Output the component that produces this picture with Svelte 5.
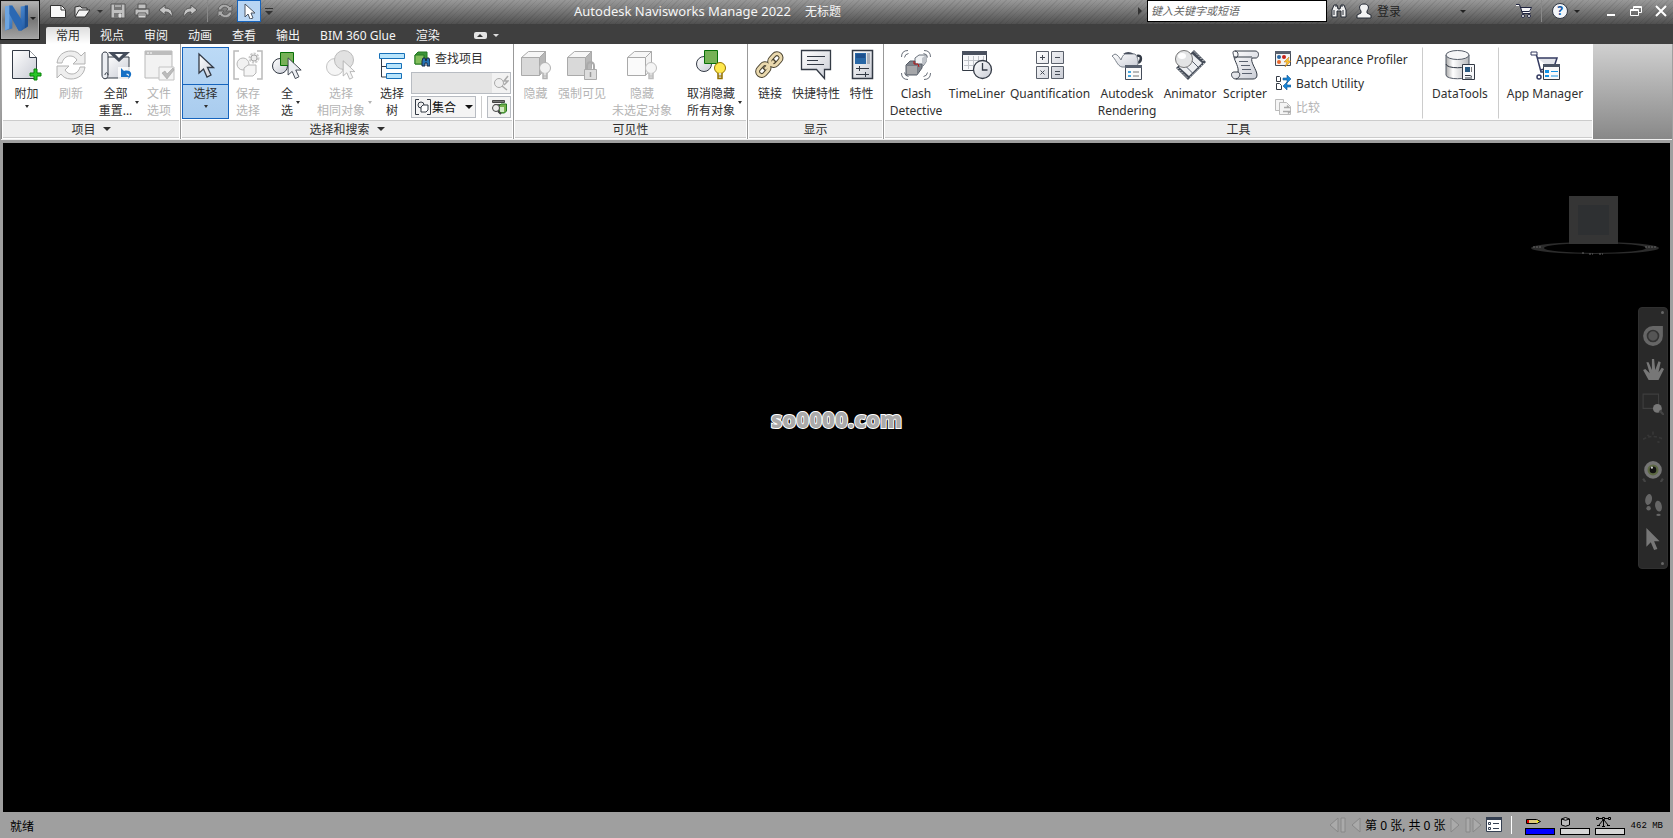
<script lang="ts">
	type Tool = {
		icon: string;
		lines: string[];
		disabled?: boolean;
		menu?: 'below' | 'side';
		selected?: boolean;
		divided?: boolean;
	};

	const tabs = ['常用', '视点', '审阅', '动画', '查看', '输出', 'BIM 360 Glue', '渲染'];
	let activeTab = $state('常用');
	let keyword = $state('');
	let quickFind = $state('');

	const project: Tool[] = [
		{ icon: 'append', lines: ['附加'], menu: 'below' },
		{ icon: 'refresh', lines: ['刷新'], disabled: true },
		{ icon: 'reset', lines: ['全部', '重置...'], menu: 'side' },
		{ icon: 'fileOptions', lines: ['文件', '选项'], disabled: true }
	];
	const selection: Tool[] = [
		{ icon: 'cursor', lines: ['选择'], menu: 'below', selected: true },
		{ icon: 'saveSelection', lines: ['保存', '选择'], disabled: true },
		{ icon: 'selectAll', lines: ['全', '选'], menu: 'side' },
		{ icon: 'selectSame', lines: ['选择', '相同对象'], disabled: true, menu: 'side' },
		{ icon: 'tree', lines: ['选择', '树'] }
	];
	const visibility: Tool[] = [
		{ icon: 'hide', lines: ['隐藏'], disabled: true },
		{ icon: 'require', lines: ['强制可见'], disabled: true },
		{ icon: 'hideUnselected', lines: ['隐藏', '未选定对象'], disabled: true },
		{ icon: 'unhide', lines: ['取消隐藏', '所有对象'], menu: 'side' }
	];
	const display: Tool[] = [
		{ icon: 'link', lines: ['链接'] },
		{ icon: 'quickProps', lines: ['快捷特性'] },
		{ icon: 'properties', lines: ['特性'] }
	];
	const tools: Tool[] = [
		{ icon: 'clash', lines: ['Clash', 'Detective'] },
		{ icon: 'timeliner', lines: ['TimeLiner'] },
		{ icon: 'quantification', lines: ['Quantification'] },
		{ icon: 'rendering', lines: ['Autodesk', 'Rendering'] },
		{ icon: 'animator', lines: ['Animator'] },
		{ icon: 'scripter', lines: ['Scripter'] }
	];
	const extras: Tool[] = [
		{ icon: 'dataTools', lines: ['DataTools'], divided: true },
		{ icon: 'appManager', lines: ['App Manager'], divided: true }
	];

	const arrowPath = 'M9 1v19l4.500-4 3.500 8 4-2-3.500-7.500h6z';
	const bulb = (fill: string, line: string) =>
		`<circle cx="24" cy="18" r="5.500" fill="${fill}" stroke="${line}"/><path d="M22 23v5.500h4V23" fill="#ddd" stroke="${line}" stroke-width="1.500"/><path d="M22 26h4" stroke="${line}"/>`;
	const cube = (side: string, face: string) =>
		`<path d="M.5 7.500h18v18H.5z" fill="${face}" stroke="#aaa"/><path d="M.5 7.500l7-6h17l-6 6z" fill="#f6f6f6" stroke="#aaa"/><path d="M18.500 7.500l6-6v17l-6 7z" fill="${side}" stroke="#aaa"/>`;

	// 30 x 30 artwork for the large ribbon buttons
	const large: Record<string, string> = {
		append: '<path d="M.5.500h17l7 7v21H.5z" fill="url(#paper)" stroke="#333a45"/><path d="M17.500.500v7h7" fill="#fff" stroke="#333a45"/><path d="M22 20h3v4h4v3h-4v4h-3v-4h-4v-3h4z" fill="#28c628" stroke="#078207" transform="translate(0 -1)"/>',
		refresh: '<g fill="#eee" stroke="#b3b3b3" stroke-linejoin="round"><path d="M1 13C2 5 8 1 15 1c5 0 8 2 10 5l4-4v12H17l4-4c-2-3-4-4-7-4-4 0-7 3-8 7z"/><path d="M29 17c-1 8-7 12-14 12-5 0-8-2-10-5l-4 4V16h12l-4 4c2 3 4 4 7 4 4 0 7-3 8-7z"/></g>',
		reset: '<path d="M4 7h24v21H4z" fill="url(#paper)" stroke="#333a45"/><path d="M1 5c0-4 6-4 6 0v20c0 5-6 5-6 0z" fill="#eceef2" stroke="#333a45"/><path d="M4 25c0-3 3-3 3 0" fill="none" stroke="#333a45"/><path d="M7 2h22L18 12z" fill="#454d5b"/><path d="M14 4h8l-4 4z" fill="#fff"/><path d="M17 17h13v13H17z" fill="#fff" opacity=".8"/><path d="M20 18v9h9l-4-3c3-1 4 1 2 5 6-4 3-10-4-8z" fill="#1670c5"/>',
		fileOptions: '<path d="M1 1h27v27H1z" fill="#f2f2f2" stroke="#b9b9b9"/><path d="M1 1h27v4H1z" fill="#bdbdbd"/><path d="M3 3h2M6 3h2" stroke="#fff"/><path d="M15 17h15v13H15z" fill="#f4f4f4" stroke="#c4c4c4"/><path d="M18 23l3-2 2 3 6-6 1 2-7 9z" fill="#bbb" stroke="#999" stroke-width=".5"/>',
		cursor: `<path d="${arrowPath}" transform="translate(-1 3)" fill="url(#paper)" stroke="#333a45" stroke-width="1.300"/>`,
		saveSelection: '<path d="M6 1H1v28h5M24 1h5v28h-5" fill="none" stroke="#bbb" stroke-width="1.500"/><circle cx="10" cy="14" r="6" fill="#f1f1f1" stroke="#b6b6b6"/><path d="M11 18l4-3h8v8l-3 3h-9z" fill="#f5f5f5" stroke="#b6b6b6"/><circle cx="21" cy="8" r="4" fill="none" stroke="#ccc" stroke-width="3" stroke-dasharray="2 1"/><circle cx="21" cy="8" r="3" fill="#eee" stroke="#aaa"/>',
		selectAll: `<circle cx="8" cy="16" r="7.500" fill="url(#paper)" stroke="#333a45"/><path d="M8.500 2.500h13v13h-13z" fill="#77b157" stroke="#087008"/><path d="${arrowPath}" transform="translate(8 7) scale(.9)" fill="#eceef2" stroke="#333a45"/>`,
		selectSame: `<circle cx="9" cy="17" r="8.500" fill="#f5f5f5" stroke="#c5c5c5"/><circle cx="18" cy="10" r="9.500" fill="#e1e1e1" stroke="#bbb"/><path d="${arrowPath}" transform="translate(10 10) scale(.8)" fill="#f5f5f5" stroke="#aaa"/>`,
		tree: '<path d="M4.500 8v19h5M4.500 16.500h5" fill="none" stroke="#333a45"/><g fill="#b9e5fc" stroke="#1670b8"><path d="M2.500 3.500h25v5h-25zM9.500 13.500h15v5h-15zM9.500 23.500h15v5h-15z"/></g>',
		hide: cube('#b7b7b7', '#d9d9d9') + bulb('#f1f1f1', '#b2b2b2'),
		require: cube('#b7b7b7', '#d9d9d9') + '<path d="M20 20v-4c0-5 7-5 7 0v4" fill="none" stroke="#aaa" stroke-width="2"/><path d="M17.500 19.500h12v10h-12z" fill="#ddd" stroke="#aaa"/><path d="M23.500 22v5" stroke="#999" stroke-width="1.500"/>',
		hideUnselected: cube('#f2f2f2', '#fafafa') + bulb('#f5f5f5', '#bdbdbd'),
		unhide: '<circle cx="8" cy="14" r="7.500" fill="url(#paper)" stroke="#333a45"/><path d="M8.500.500h13v13h-13z" fill="#77b157" stroke="#087008"/>' + bulb('#ffe84d', '#957300'),
		link: '<g fill="none"><g stroke="#4a4330" stroke-width="5"><rect x="2" y="16" width="13" height="8" rx="4" transform="rotate(-48 8 20)"/><rect x="14" y="6" width="13" height="8" rx="4" transform="rotate(-48 20 10)"/><path d="M9 20L20 10"/></g><g stroke="#ead9ae" stroke-width="3"><rect x="2" y="16" width="13" height="8" rx="4" transform="rotate(-48 8 20)"/><rect x="14" y="6" width="13" height="8" rx="4" transform="rotate(-48 20 10)"/><path d="M10 19L19 11"/></g></g>',
		quickProps: '<path d="M.5.500h29v19h-6v9l-8-9H.5z" fill="url(#paper)" stroke="#333a45" stroke-width="1.300"/><path d="M6 6.500h18M6 10.500h11M6 14.500h17" stroke="#333a45"/>',
		properties: '<path d="M5.500.500h20v28h-20z" fill="url(#paper)" stroke="#333a45" stroke-width="1.500"/><path d="M8 3h11v11H8z" fill="#2867a6"/><path d="M9 4h9v4H9z" fill="#1e508d"/><path d="M20 3h3v11h-3z" fill="#a9afb9"/><path d="M9 18.500h13M9 24.500h13M12.500 16v5M18.500 22v5" stroke="#333a45"/>',
		clash: '<g fill="none" stroke="#6a707a"><path d="M.5 7Q.5.500 7 .5M3.500 7.500Q4 4 7.500 3.500M23 .5q6.500 0 6.500 6.500M22.500 3.500q4 .5 4 4M.5 23q0 6.500 6.500 6.500M3.500 22.500q.5 3.500 4 4M23 29.500q6.500 0 6.500-6.500M22.500 26.500q3.500-.5 4-4"/></g><path d="M14 8l4-3h7v7l-3 4h-8z" fill="#f1f3f5" stroke="#69707a"/><path d="M21 8l4-3v7l-4 4z" fill="#c0c4ca"/><path d="M5 15l4-4h5v3h7v4l-5 7H5z" fill="#7f848c" stroke="#555b65"/><path d="M5.500 15.500h11v9h-11z" fill="#a5a6a9" stroke="#777c84"/><path d="M13 11v3h4l1 3" fill="none" stroke="#b81414"/>',
		timeliner: '<path d="M.5 1.500h24v19H.5z" fill="#f8f9fb" stroke="#333a45"/><path d="M0 1h25v4H0z" fill="#4a515f"/><path d="M2 10.500h21M2 15.500h21M6.500 6v13M11.500 6v13M16.500 6v13M21.500 6v13" stroke="#c2c5ca"/><circle cx="20.500" cy="19.500" r="9" fill="url(#paper)" stroke="#333a45" stroke-width="1.300"/><path d="M20.500 13v7h5" fill="none" stroke="#333a45" stroke-width="1.300"/>',
		quantification: '<g fill="url(#paper)" stroke="#5a606b"><path d="M1.500 1.500h12v12h-12zM16.500 1.500h12v12h-12zM1.500 16.500h12v12h-12zM16.500 16.500h12v12h-12z"/></g><path d="M5 7.500h5M7.500 5v5M20 7.500h5M5.500 20.500l4 4M9.500 20.500l-4 4M20 21.500h5M20 24.500h5" stroke="#454b55"/>',
		rendering: '<path d="M25 6c5-2 5 5 1 7" fill="none" stroke="#333a45" stroke-width="2.500"/><path d="M10 17C5 16 4 9 0 6l3-2c3 1 4 3 6 6 1-3 2-5 4-6h10c3 3 4 8 2 13z" fill="url(#paper)" stroke="#7b828c"/><path d="M11 4q5-4 11 0z" fill="#4a515f"/><path d="M13.500 15.500h16v14h-16z" fill="#fafafa" stroke="#454c5a"/><path d="M13 15h17v3H13z" fill="#59616f"/><path d="M16 21h3v2h-3zM16 25h3v2h-3z" fill="#46a6de"/><path d="M21 22h6M21 26h6" stroke="#777"/>',
		animator: '<path d="M19 0L31 12 13 30 1 18z" fill="#454c58"/><path d="M17 4L27 13 14 26 4 17z" fill="#eef0f3"/><path d="M8.500 14l9 9M14 8l9 9" stroke="#59616f"/><path d="M19 1.500L29.500 12M2.500 18L13 28.500" fill="none" stroke="#fff" stroke-dasharray="1.500 1.500"/><path d="M29 13L14 28" stroke="#b9bec6" stroke-dasharray="1.500 1.500"/><circle cx="9" cy="9" r="8.500" fill="#e3e4e5" stroke="#777"/><ellipse cx="7" cy="6" rx="4" ry="3" fill="#fff"/>',
		scripter: '<path d="M5 1h20c5 0 4 7 1 7h-4c-2 4 5 12 5 17 0 3-2 4-4 4H6c-5 0-6-7-2-7h4C9 17 5 12 4 7 3 3 2 1 5 1z" fill="url(#paper)" stroke="#333a45"/><path d="M5 1c4 0 4 7 0 7M8 22c3 1 2 6-2 7M4 7h18" fill="none" stroke="#333a45"/><path d="M9 11.500h9M11 15.500h9M12 19.500h9M12 23.500h10" stroke="#59616f"/>',
		dataTools: '<path d="M1 5v20c0 5 23 5 23 0V5" fill="url(#metal)" stroke="#555c68"/><ellipse cx="12.500" cy="5" rx="11.500" ry="4.500" fill="#f6f6f7" stroke="#555c68"/><path d="M1 14c0 5 23 5 23 0" fill="none" stroke="#333a45"/><path d="M17.500 14.500h12v15h-12z" fill="#f7f8fa" stroke="#333a45"/><path d="M20 17h5v5h-5z" fill="#285982"/><path d="M26.500 17v5" stroke="#777"/><path d="M20 25.500h5l2 1M20 28h7" fill="none" stroke="#333a45"/>',
		appManager: '<path d="M1 3h5l5 19h14M7 8h20l-3 9-14 3" fill="#e2e4ea" stroke="#343b61" stroke-width="1.500"/><path d="M1 2h6v3H1z" fill="#fff" stroke="#343b61"/><path d="M7 27a2 2 0 104 0 2 2 0 10-4 0" fill="#fff" stroke="#343b61" stroke-width="1.500"/><path d="M13.500 14.500h16v15h-16z" fill="#fafafa" stroke="#333a45"/><path d="M13 14h17v3H13z" fill="#4a5364"/><path d="M15 20h4v3h-4zM15 25h4v2h-4z" fill="#1593e6"/><path d="M21 21.500h7M21 26h7" stroke="#1593e6"/>'
	};

	// 16 x 16 artwork
	const small: Record<string, string> = {
		newDoc: '<path d="M.5 2.500h11l4 4v8H.5z" fill="#fafafa" stroke="#333"/><path d="M11 3v4h4" fill="none" stroke="#333"/>',
		open: '<path d="M1 13V4l5-1 2 2h5v3" fill="#ddd" stroke="#333"/><path d="M1 14l4-7h11l-5 7z" fill="#f5f5f5" stroke="#333"/>',
		save: '<path d="M1 1h14v14H1z" fill="#c0c0c0" stroke="#555"/><path d="M4 1h8v6H4zM4 10h8v5H4z" fill="#777"/><path d="M5 3h6M9 11h2v3H9z" fill="#ddd" stroke="#ddd"/>',
		print: '<path d="M4 1h8v5H4zM1 6h14v6H1z" fill="#c0c0c0" stroke="#555"/><path d="M4 10h8v5H4z" fill="#d5d5d5" stroke="#555"/><path d="M5 12h6" stroke="#666"/>',
		undo: '<path d="M1 7l6-5v3c6 0 8 4 7 9-2-4-4-5-7-5v3z" fill="#c5c5c5" stroke="#555"/>',
		redo: '<path d="M15 7L9 2v3C3 5 1 9 2 14c2-4 4-5 7-5v3z" fill="#c5c5c5" stroke="#555"/>',
		sync: '<path d="M1 7c1-7 9-7 12-3l2-2v6H9l2-2C9 3 5 4 4 7zM15 9c-1 7-9 7-12 3l-2 2V8h6l-2 2c2 3 6 2 7-1z" fill="#aaa" stroke="#606060"/>',
		pick: '<path d="M4 1v13l3-3 2 5 3-1-2-5h4z" fill="#fff" stroke="#4c5562"/>',
		binoculars: '<path d="M1 7l2-5h3l1 4h2l1-4h3l2 5v7h-5V8H6v6H1z" fill="#eee" stroke="#252a35"/><path d="M3 7v5M12 7v5M4 3h2M10 3h2" stroke="#252a35"/>',
		user: '<path d="M5 8C2 4 4 1 8 1s6 3 3 7v2l4 2v3H1v-3l4-2z" fill="#f2f2f2" stroke="#252a35"/>',
		cart: '<path d="M5 4.500h10.500l-2 6H7z" fill="#f5f5f7"/><path d="M0 1.500h3.500l3 9h8M4.500 4.500h11l-2 4H6" fill="none" stroke="#20243f"/><path d="M0 2.500h3" stroke="#fff"/><circle cx="7" cy="13" r="1.500" fill="#fff" stroke="#20243f"/><circle cx="13" cy="13" r="1.500" fill="#fff" stroke="#20243f"/>',
		find: '<path d="M1 4l3-3h9v8l-3 4H1z" fill="#3c9338" stroke="#237a20"/><path d="M1 4h9v9H1z" fill="#83bd5c" stroke="#237a20"/><path d="M8 10l1-3h2l1 3 1-3h2l1 4v4h-3v-3h-2v3H8z" fill="#2673b4" stroke="#1b2940"/>',
		quick: '<circle cx="6" cy="8" r="4.500" fill="#eee" stroke="#aaa"/><path d="M9 11l5 4M15 1l-4 5h4l-4 4" fill="none" stroke="#aaa" stroke-width="1.500"/>',
		sets: '<path d="M4 .5H.5v15H4M12 .5h3.500v15H12" fill="none" stroke="#333a45"/><circle cx="6" cy="6" r="3" fill="#eee" stroke="#333a45"/><path d="M6 8l2-2h5v5l-2 2H6z" fill="#fff" stroke="#333a45"/>',
		inspect: '<path d="M1.500 1.500h12v2h-12z" fill="#777" stroke="#444"/><path d="M3.500 5.500h9v3h-9z" fill="#eee" stroke="#555"/><path d="M8 7l2-2h5.500v7l-2 2H8z" fill="#75af4c" stroke="#237a20"/><path d="M9 8h4v5H9z" fill="#d4ebc6"/><circle cx="5" cy="9" r="3.500" fill="#eee" stroke="#444"/><path d="M7 12l3 3" stroke="#444" stroke-width="2"/>',
		profiler: '<path d="M.5.500h15v14H.5z" fill="#f4f4f4" stroke="#454c58"/><path d="M0 0h16v3H0z" fill="#59606d"/><circle cx="4" cy="6" r="2" fill="#2968a4"/><circle cx="9" cy="6" r="2" fill="#c92219"/><circle cx="4" cy="11" r="2" fill="#e8672b"/><path d="M14 6l-5 5h3l-2 5 6-6h-3z" fill="#ffc832" stroke="#b96c15" stroke-width=".5"/>',
		batch: '<path d="M1.500 1.500h3l1 1v4h-4zM1.500 8.500h3l2 2v4h-5z" fill="#fff" stroke="#333a45"/><path d="M8 3h4V0l4 4-4 4V5H8zM16 10h-4V7l-4 4 4 4v-3h4z" fill="#1784d5" stroke="#155894" stroke-width=".6"/>',
		compare: '<path d="M.5.500h8v11h-8z" fill="#f5f5f5" stroke="#bbb"/><path d="M4.500 3.500h7l4 4v8h-11z" fill="#f5f5f5" stroke="#bbb"/><path d="M9 8.500h5l-2-2M8 12.500h7l-2 2" fill="none" stroke="#aaa" stroke-width="1.500"/>',
		sheets: '<path d="M.5.500h15v14H.5z" fill="#fff" stroke="#354052"/><path d="M0 0h16v3H0z" fill="#354052"/><path d="M2.500 5.500h2v2h-2zM2.500 10.500h2v2h-2z" fill="#fff" stroke="#354052"/><path d="M7 6.500h6M7 11.500h6" stroke="#354052"/>'
	};

	const navTools = [
		{ name: '全导航控制盘', art: '<path d="M10 1h9v9a9 9 0 11-9-9z" fill="#666"/><circle cx="10" cy="10" r="5" fill="#555" stroke="#333" stroke-width="1.500"/>' },
		{ name: '平移', art: '<path d="M6 19L1 10l2-1 4 4L4 3h2l3 7V0h2l1 10 3-8 2 1-2 9 3-4 2 1-5 10z" fill="#777"/>' },
		{ name: '缩放窗口', art: '<path d="M1 1h14v13H1z" fill="none" stroke="#3e3e3e"/><circle cx="14" cy="14" r="4" fill="#777"/><path d="M16 16l4 4" stroke="#444" stroke-width="2"/>' },
		{ name: '动态观察', art: '<path d="M1 12q9-5 18 0M10 5v4M5 8l2 2M14 14l2 1" fill="none" stroke="#373737" stroke-width="1.500" stroke-dasharray="3 2"/>' },
		{ name: '环视', art: '<circle cx="10" cy="9" r="8" fill="#757575"/><circle cx="10" cy="9" r="5" fill="#5c6842"/><circle cx="10" cy="9" r="3" fill="#111"/><circle cx="9" cy="7" r="1" fill="#ccc"/><path d="M1 17l2 3M19 17l-2 3" stroke="#444" stroke-width="2"/>' },
		{ name: '漫游', art: '<ellipse cx="6" cy="5" rx="3" ry="5" fill="#666" transform="rotate(12 6 5)"/><ellipse cx="6" cy="13" rx="2" ry="2" fill="#666"/><ellipse cx="15" cy="11" rx="3" ry="5" fill="#666" transform="rotate(-12 15 11)"/><ellipse cx="15" cy="19" rx="2" ry="1" fill="#666"/>' },
		{ name: '选择', art: '<path d="M4 0v17l4-4 3 7 3-1-3-7h5z" fill="#777"/>' }
	];
</script>

{#snippet glyph(name: string)}
	<svg class="glyph" viewBox="0 0 16 16" aria-hidden="true">{@html small[name]}</svg>
{/snippet}

{#snippet caret()}
	<span class="caret"></span>
{/snippet}

{#snippet toolButton(tool: Tool)}
	<button type="button" class="tool" class:selected={tool.selected} class:divided={tool.divided} disabled={tool.disabled}>
		<svg class="art" viewBox="0 0 30 30" aria-hidden="true">{@html large[tool.icon]}</svg>
		<span class="tool-label">
			<span class="tool-text">{#each tool.lines as line}<span>{line}</span>{/each}</span>
			{#if tool.menu === 'side'}{@render caret()}{/if}
		</span>
		{#if tool.menu === 'below'}{@render caret()}{/if}
	</button>
{/snippet}

<svg class="defs" aria-hidden="true">
	<defs>
		<linearGradient id="paper" x1="0" y1="0" x2="1" y2="1"><stop offset="0" stop-color="#fff" /><stop offset="1" stop-color="#c9ccd5" /></linearGradient>
		<linearGradient id="metal"><stop offset="0" stop-color="#aaa" /><stop offset=".3" stop-color="#fff" /><stop offset="1" stop-color="#b5b7ba" /></linearGradient>
		<linearGradient id="brand" x1="0" y1="0" x2="1" y2="1"><stop offset="0" stop-color="#75aee8" /><stop offset=".5" stop-color="#3f7cc4" /><stop offset="1" stop-color="#1d549c" /></linearGradient>
	</defs>
</svg>

<div class="window">
	<header class="head">
		<button type="button" class="app-button" aria-label="应用程序菜单">
			<svg class="logo" viewBox="0 0 24 26" aria-hidden="true">
				<path d="M1 2l7-1 8 13V2l7-1v20l-6 4h-3L8 14v9l-7 2z" fill="url(#brand)" />
				<path d="M5 1h3l9 14v10h-3L5 9z" fill="#2b68b3" />
				<path d="M1 2l4-1v22l-4 2z" fill="#6ea5e0" />
				<path d="M20 1h3v20l-3 2z" fill="#1d4f90" />
			</svg>
			{@render caret()}
		</button>
		<div class="head-rows">
			<div class="titlebar">
				<div class="quick-access">
					<button type="button" aria-label="新建">{@render glyph('newDoc')}</button>
					<button type="button" aria-label="打开">{@render glyph('open')}</button>
					<button type="button" class="narrow" aria-label="打开选项">{@render caret()}</button>
					<button type="button" aria-label="保存">{@render glyph('save')}</button>
					<button type="button" aria-label="打印">{@render glyph('print')}</button>
					<button type="button" aria-label="撤消">{@render glyph('undo')}</button>
					<button type="button" aria-label="恢复">{@render glyph('redo')}</button>
					<span class="bar"></span>
					<button type="button" aria-label="刷新">{@render glyph('sync')}</button>
					<button type="button" class="picked" aria-label="选择">{@render glyph('pick')}</button>
					<button type="button" class="narrow overflow" aria-label="自定义快速访问工具栏">{@render caret()}</button>
				</div>
				<h1><span>Autodesk Navisworks Manage 2022</span><span>无标题</span></h1>
				<div class="info-center">
					<span class="expand"></span>
					<input type="text" class="search" placeholder="键入关键字或短语" aria-label="搜索" bind:value={keyword} />
					<button type="button" aria-label="查找">{@render glyph('binoculars')}</button>
					<button type="button" class="login">{@render glyph('user')}<span>登录</span>{@render caret()}</button>
					<button type="button" class="cart" aria-label="应用商店">{@render glyph('cart')}</button>
					<span class="bar"></span>
					<button type="button" class="help" aria-label="帮助"><span class="help-mark">?</span>{@render caret()}</button>
				</div>
				<div class="window-buttons">
					<button type="button" aria-label="最小化"><svg viewBox="0 0 12 12"><path d="M2 10h8" stroke-width="2" /></svg></button>
					<button type="button" aria-label="还原"><svg viewBox="0 0 12 12"><path d="M3.500 4V1.500h8v6H9M.5 4.500h8v6h-8zM1 5.500h7M4 2.500h7" /></svg></button>
					<button type="button" aria-label="关闭"><svg viewBox="0 0 12 12"><path d="M1 1l10 10M11 1L1 11" stroke-width="2" /></svg></button>
				</div>
			</div>
			<nav class="tabs">
				{#each tabs as tab}
					<button type="button" class="tab" class:active={tab === activeTab} onclick={() => (activeTab = tab)}>{tab}</button>
				{/each}
				<button type="button" class="minimize" aria-label="最小化功能区"><span class="pill"></span>{@render caret()}</button>
			</nav>
		</div>
	</header>

	<div class="ribbon">
		<section class="panel">
			<div class="items project">
				{#each project as tool}{@render toolButton(tool)}{/each}
			</div>
			<button type="button" class="panel-title">项目{@render caret()}</button>
		</section>
		<section class="panel">
			<div class="items selection">
				{#each selection as tool}{@render toolButton(tool)}{/each}
				<div class="find-stack">
					<button type="button" class="row-button">{@render glyph('find')}查找项目</button>
					<div class="quick-find">
						<input type="text" aria-label="快速查找" bind:value={quickFind} disabled />
						<button type="button" aria-label="快速查找" disabled>{@render glyph('quick')}</button>
					</div>
					<div class="sets-row">
						<label class="sets">{@render glyph('sets')}<select aria-label="集合"><option>集合</option></select>{@render caret()}</label>
						<span class="split"></span>
						<button type="button" class="inspect" aria-label="选择检验器">{@render glyph('inspect')}</button>
					</div>
				</div>
			</div>
			<button type="button" class="panel-title">选择和搜索{@render caret()}</button>
		</section>
		<section class="panel">
			<div class="items visibility">
				{#each visibility as tool}{@render toolButton(tool)}{/each}
			</div>
			<div class="panel-title">可见性</div>
		</section>
		<section class="panel">
			<div class="items display">
				{#each display as tool}{@render toolButton(tool)}{/each}
			</div>
			<div class="panel-title">显示</div>
		</section>
		<section class="panel last">
			<div class="items tools">
				{#each tools as tool}{@render toolButton(tool)}{/each}
				<div class="utility-stack">
					<button type="button" class="row-button">{@render glyph('profiler')}Appearance Profiler</button>
					<button type="button" class="row-button">{@render glyph('batch')}Batch Utility</button>
					<button type="button" class="row-button" disabled>{@render glyph('compare')}比较</button>
				</div>
				{#each extras as tool}{@render toolButton(tool)}{/each}
			</div>
			<div class="panel-title">工具</div>
		</section>
	</div>

	<main class="viewport">
		<svg class="viewcube" viewBox="0 0 130 64" aria-hidden="true">
			<path d="M1 53a64 6 0 10128 0 64 6 0 10-128 0M14 53a51 5 0 11102 0 51 5 0 11-102 0" fill="#2c2c2c" fill-rule="evenodd" />
			<path d="M52 58h3M59 59h4M69 59h4M3 52h8M115 52h11" stroke="#666" stroke-dasharray="2 1" />
			<path d="M39 1h49v48H39z" fill="#353535" />
			<path d="M48 10h31v30H48z" fill="#2e3032" />
		</svg>
		<div class="navbar">
			<span class="nav-dot"></span>
			<div class="nav-tools">
				{#each navTools as item}
					<button type="button" aria-label={item.name}><svg viewBox="0 0 20 20">{@html item.art}</svg></button>
				{/each}
			</div>
			<span class="nav-dot"></span>
		</div>
	</main>

	<footer class="status">
		<span class="ready">就绪</span>
		<div class="sheet-nav">
			<button type="button" aria-label="第一张" disabled><svg viewBox="0 0 18 16"><path d="M9 1v14L1 8zM12 1h4v14h-4z" /></svg></button>
			<button type="button" aria-label="上一张" disabled><svg class="single" viewBox="0 0 10 16"><path d="M9 1v14L1 8z" /></svg></button>
			<span class="sheet-count">第 0 张, 共 0 张</span>
			<button type="button" aria-label="下一张" disabled><svg class="single" viewBox="0 0 10 16"><path d="M1 1v14l8-7z" /></svg></button>
			<button type="button" aria-label="最后一张" disabled><svg viewBox="0 0 18 16"><path d="M2 1h4v14H2zM9 1v14l8-7z" /></svg></button>
			<button type="button" aria-label="图纸浏览器">{@render glyph('sheets')}</button>
		</div>
		<span class="status-split"></span>
		<div class="meters">
			<div class="meter busy">
				<svg viewBox="0 0 16 10" aria-hidden="true"><path d="M1.500 2.500h10l4 2-4 2h-10z" fill="#dfca79" stroke="#000" /><path d="M2 3h2v3H2z" fill="#d00" /><path d="M12 3l2 1.500L12 6z" fill="#ff0" /></svg>
				<span></span>
			</div>
			<div class="meter">
				<svg viewBox="0 0 16 10" aria-hidden="true"><path d="M1.500 2v6q4 2.500 8 0V2q-4-3-8 0 4 2.500 8 0" fill="#bbb" stroke="#000" /></svg>
				<span></span>
			</div>
			<div class="meter">
				<svg viewBox="0 0 16 10" aria-hidden="true"><path d="M1.500.5h2v2h-2zM13.500.5h2v2h-2zM7.500.5h2v2h-2zM4 1.500h3M10 1.500h3M8.500 3v6M8 3L4 8M9 3l4 5M2 8.500h3M12 8.500h3M7 9.500h3" fill="none" stroke="#000" /></svg>
				<span></span>
			</div>
		</div>
		<span class="memory">462 MB</span>
	</footer>
	<p class="watermark">so0000.com</p>
</div>

<style>
	:global(body) { margin: 0; background: #9f9f9f; }
	.window { position: relative; display: flex; flex-direction: column; height: 100vh; overflow: hidden; background: #9f9f9f; color: #303030; font: 12px/17px 'Noto Sans', 'Noto Sans CJK SC', sans-serif; }
	.defs { position: absolute; width: 0; height: 0; }
	button, input, select { font: inherit; color: inherit; }
	button { display: flex; align-items: center; justify-content: center; padding: 0; border: 0; background: none; white-space: nowrap; }
	svg { flex: none; }
	.glyph { width: 16px; height: 16px; }
	.caret { flex: none; width: 0; height: 0; border: 3px solid transparent; border-top: 3px solid currentColor; border-bottom: 0; }
	.bar { width: 1px; height: 22px; background: #888; }

	.head { display: flex; height: 44px; background: #3f3f3f; }
	.app-button { box-sizing: border-box; width: 40px; height: 40px; gap: 1px; padding-bottom: 4px; border: 1px solid #111; outline: 1px solid #aaa; outline-offset: -2px; background: linear-gradient(#b4b4b4, #777 50%, #a5a5a5); color: #222; }
	.logo { width: 25px; height: 28px; }
	.head-rows { flex: 1; min-width: 0; }
	.titlebar { display: flex; height: 24px; background: repeating-linear-gradient(135deg, transparent 0 3px, rgb(0 0 0 / 7%) 3px 4px), linear-gradient(#999, #505050); }
	.quick-access, .info-center, .window-buttons { display: flex; align-items: center; height: 22px; }
	.quick-access { padding-left: 6px; color: #333; }
	.quick-access button { width: 24px; height: 22px; }
	.quick-access .narrow { width: 12px; }
	.quick-access .bar { margin: 0 5px; }
	.quick-access .picked { box-sizing: border-box; border: 1px solid #1664bd; background: #b8d5f3; }
	.quick-access .overflow { flex-direction: column; gap: 2px; width: 16px; }
	.overflow::before { width: 8px; height: 1px; background: #333; content: ''; }
	.overflow .caret { border-width: 4px 4px 0; }
	h1 { display: flex; flex: 1; justify-content: center; gap: 14px; margin: 0; color: #f5f5f5; font-size: 13px; font-weight: 400; line-height: 23px; white-space: nowrap; }
	h1 span:last-child { font-size: 12px; }
	.info-center { color: #222; }
	.expand { border: 4px solid transparent; border-left-color: #333; border-right: 0; }
	.search { box-sizing: border-box; width: 180px; height: 22px; margin: 0 4px 0 5px; padding: 0 3px 2px; border: 1px solid #000; background: #fff; font-size: 11px; font-style: italic; }
	.search::placeholder { color: #666; opacity: 1; }
	.login { gap: 5px; width: 110px; height: 22px; margin-left: 9px; }
	.login .caret { margin-left: auto; }
	.info-center .cart { margin: 0 9px 0 50px; }
	.help { gap: 6px; margin-left: 10px; }
	.help-mark { box-sizing: border-box; width: 16px; height: 16px; border: 1px solid #303642; border-radius: 50%; background: #f3f5f9; color: #1458a3; font-weight: 700; line-height: 14px; text-align: center; }
	.window-buttons { gap: 13px; margin: 0 6px 0 25px; }
	.window-buttons svg { width: 12px; height: 12px; fill: none; stroke: #fff; }

	.tabs { display: flex; align-items: flex-end; height: 20px; padding-left: 6px; }
	.tab { height: 17px; padding: 0 10px; color: #f5f5f5; }
	.tab.active { border-radius: 2px 2px 0 0; background: linear-gradient(#ddd, #fff); color: #303030; }
	.minimize { gap: 6px; height: 17px; margin-left: 24px; color: #ddd; }
	.pill { display: flex; align-items: center; justify-content: center; width: 13px; height: 7px; border-radius: 2px; background: #e4e4e4; }
	.pill::before { border: 3px solid transparent; border-top: 0; border-bottom-color: #333; content: ''; }

	.ribbon { display: flex; height: 95px; margin: 0 1px; padding-left: 1px; border-bottom: 1px solid #efefef; background: linear-gradient(#d0d0d0, #888); }
	.panel { display: flex; flex-direction: column; padding: 0 1px; border-right: 1px solid #999; background: #fff; }
	.panel.last { border-right: 0; }
	.items { display: grid; height: 73px; padding-top: 3px; }
	.project { grid-template-columns: 47px 42px 47px 40px; }
	.selection { grid-template-columns: 47px 38px 40px 68px 34px 103px; }
	.visibility { grid-template-columns: 41px 52px 68px 70px; }
	.display { grid-template-columns: 42px 50px 41px; }
	.tools { grid-template-columns: 62px 60px 86px 68px 58px 52px 151px 76px 94px; }
	.tool { box-sizing: border-box; flex-direction: column; justify-content: flex-start; width: 100%; height: 72px; padding-top: 2px; border: 1px solid transparent; }
	.tool:disabled, .row-button:disabled { color: #b4b4b4; }
	.tool.selected { border-color: #1664bd; background: linear-gradient(#bcdaf6, #a9ccee); }
	.tool.divided { border-left-color: #ccc; }
	.art { width: 30px; height: 30px; overflow: visible; }
	.tool-label { display: grid; grid-template-columns: minmax(0, 1fr) auto minmax(0, 1fr); align-items: center; width: 100%; margin-top: 4px; border-top: 1px solid transparent; }
	.selected .tool-label { border-top-color: #1664bd; }
	.tool-text { display: flex; flex-direction: column; grid-column: 2; align-items: center; }
	.tool .caret { border-width: 3px 2px 0; }
	.tool-label .caret { margin-left: 3px; }
	.tool > .caret { margin-top: 3px; }
	.panel-title { display: flex; align-items: center; justify-content: center; gap: 7px; box-sizing: border-box; height: 18px; border: solid #ccc; border-width: 1px 0; background: #efefef; }
	.panel-title .caret { border-width: 4px 4px 0; }
	.find-stack { display: flex; flex-direction: column; gap: 2px; padding-left: 2px; }
	.row-button { justify-content: flex-start; gap: 5px; height: 24px; }
	.find-stack .row-button { height: 23px; padding-left: 3px; }
	.quick-find { display: flex; box-sizing: border-box; width: 100px; height: 22px; border: 1px solid #b8bcc2; background: #e4e4e4; }
	.quick-find input { flex: 1; min-width: 0; padding: 0; border: 0; background: none; }
	.quick-find button { width: 18px; background: #f2f2f2; }
	.sets-row { display: flex; align-items: center; justify-content: space-between; width: 100px; }
	.sets { display: flex; align-items: center; box-sizing: border-box; width: 65px; height: 22px; padding: 0 2px 0 3px; border: 1px solid #b8bcc2; background: #f4f4f4; color: #111; }
	.sets select { flex: 1; min-width: 0; padding: 0 0 0 1px; border: 0; background: none; appearance: none; }
	.sets .caret { border-width: 4px 4px 0; }
	.split { width: 1px; height: 22px; background: #ccc; }
	.inspect { box-sizing: border-box; width: 24px; height: 22px; border: 1px solid #b8bcc2; background: #f4f4f4; }
	.utility-stack { padding-left: 4px; }

	.viewport { position: relative; flex: 1; min-height: 0; margin: 3px 3px 0; background: #000; }
	.watermark { position: absolute; top: 50%; left: 50%; margin: 0; transform: translate(-50%, -50%); color: #aaa; font: 800 22px/28px 'Open Sans', 'Noto Sans', sans-serif; paint-order: stroke fill; -webkit-text-stroke: 2px #fff; }
	.viewcube { position: absolute; top: 52px; right: 10px; width: 130px; height: 64px; }
	.navbar { position: absolute; top: 164px; right: 2px; display: flex; flex-direction: column; align-items: flex-end; justify-content: space-between; box-sizing: border-box; width: 30px; height: 262px; padding: 3px; border: 1px solid #303030; border-radius: 4px; background: #292929; }
	.nav-dot { width: 3px; height: 3px; border-radius: 50%; background: #666; }
	.nav-tools { display: flex; flex: 1; flex-direction: column; justify-content: space-between; padding: 11px 0 12px; }
	.nav-tools svg { width: 22px; height: 22px; }

	.status { display: flex; align-items: center; height: 26px; padding: 0 10px; color: #000; }
	.ready { margin-right: auto; padding-top: 3px; }
	.sheet-nav { display: flex; align-items: center; gap: 4px; }
	.sheet-nav button svg:not(.glyph) { width: 18px; height: 16px; fill: #aaa; stroke: #888; }
	.sheet-nav button svg.single { width: 10px; }
	.status-split { width: 1px; height: 18px; margin: 0 13px 0 9px; background: #fff; }
	.meters { display: flex; gap: 5px; }
	.meter { display: flex; flex-direction: column; gap: 1px; padding-top: 1px; }
	.meter svg { width: 16px; height: 10px; }
	.meter span { box-sizing: border-box; width: 30px; height: 7px; border: 1px solid #000; background: #d6d6d6; }
	.busy span { background: #00f; }
	.memory { margin-left: 6px; padding-top: 2px; font: 9px/12px 'Liberation Mono', monospace; }
</style>
